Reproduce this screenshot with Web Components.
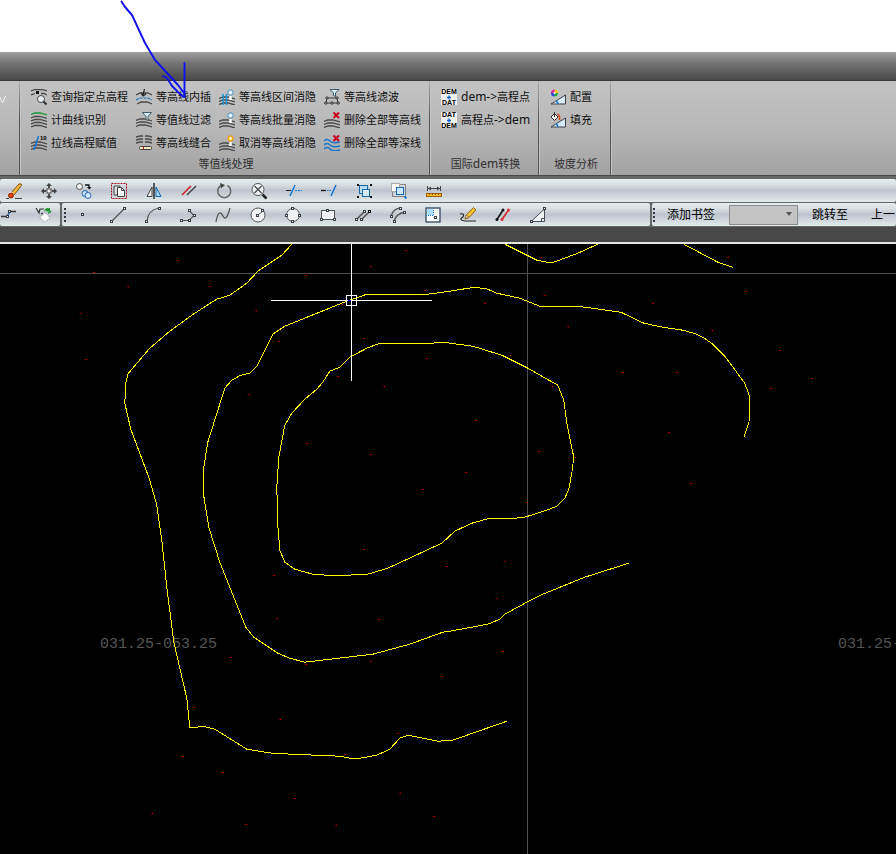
<!DOCTYPE html>
<html lang="zh-CN">
<head>
<meta charset="utf-8">
<title>等值线处理</title>
<style>
html,body{margin:0;height:100%}
body{font:11px/16px "Noto Sans","Noto Sans CJK SC",sans-serif;color:#101010;background:#fff;overflow:hidden}
</style>
</head>
<body>
<cad-window></cad-window>
<script>
const arcs = (y, n, c = '#484848') => Array.from({length: n}, (_, i) =>
  `<path d="M0 ${y + i * 3 + 1.5}L4 ${y + i * 3}H9L16 ${y + i * 3 + 2}" fill="none" stroke="${c}" stroke-width="1.3"/>`).join('');
const node = (x, y, c = '#3c4048') => `<rect x="${x - .5}" y="${y - .5}" width="2" height="2" fill="#fff" stroke="${c}"/>`;
const bulb = (c, s) => `<path d="M11.5 7v4" stroke="#fff" stroke-width="2.5"/><circle cx="11.5" cy="3.5" r="2.700" fill="${c}" stroke="${s}"/><circle cx="11.5" cy="3.5" r="1.200" fill="#fff"/>`;
const funnel = '<path d="M6.500.5h9l-3.500 4v4l-2-1v-3z" fill="#d8edf8" stroke="#405868"/>';
const cross = '<path d="M9.500.5l5.500 5.500M15 .5L9.500 6" stroke="#c8001c" stroke-width="2"/>';
const tri = '<path d="M1 15L15.500 6v9z" fill="#d8e8f4" stroke="#404048"/><path d="M6 12q2 1 2 3" fill="none" stroke="#1b78d0" stroke-width="1.500"/>';
/* lettering badge for the DEM / DAT conversion icons */
const badge = (a, b) => `<rect width="16" height="16" fill="#f0f0f0"/><text x="8" y="5" text-anchor="middle" font-family="Liberation Sans" font-weight="bold" font-size="7" fill="#000">${a}</text><path d="M8 6.500v4M6 8.500h4" stroke="#1464d0" stroke-width="1.300"/><text x="8" y="16" text-anchor="middle" font-family="Liberation Sans" font-weight="bold" font-size="7" fill="#000">${b}</text>`;

const ICONS = {
  query: '<path d="M0 2L4 .5h7L16 2M0 6l4-1.500M10 4.500h3l3 1.500" fill="none" stroke="#484848" stroke-width="1.300"/><rect x="5" y="2" width="3" height="3" fill="#111"/><circle cx="10" cy="10" r="3.500" fill="#e8f0f4" stroke="#444"/><path d="M12.500 12.500l3 3" stroke="#333" stroke-width="2"/>',
  index: arcs(1, 1, '#149632') + arcs(4.5, 4),
  assign: arcs(7, 3) + '<path d="M7.500 1L3 15" stroke="#1478d8" stroke-width="1.500"/><text x="9" y="5" font-family="Liberation Sans" font-weight="bold" font-size="6">10</text>',
  insert: '<path d="M0 6l4-2h8l4 2M1 15l4-2h6l5 2" fill="none" stroke="#484848" stroke-width="1.300"/><path d="M0 11l4-2h8l4 2" fill="none" stroke="#1474c8" stroke-width="1.200" stroke-dasharray="3 1"/><path d="M8.500 0L7 6M5 4l2 3 3-2" fill="none" stroke="#222" stroke-width="1.200"/>',
  filter: arcs(7, 3) + funnel,
  stitch: '<path d="M0 2l4-1h3M9 1h3l4 1M0 5l4-1h3M9 4h3l4 1M0 8l4-1h3M9 7h3l4 1" stroke="#484848" stroke-width="1.300" fill="none"/><rect x="3.500" y="11.500" width="12" height="3" rx="1" fill="#f0e8c0" stroke="#404040"/><path d="M7.500 11.500v3" stroke="#b82020"/>',
  hideRange: arcs(8, 3) + '<path d="M4 5v11M7.500 5v11" stroke="#1494dc" stroke-width="1.500"/>' + bulb('#c4e4f8', '#4c90bc'),
  hideBatch: arcs(8, 3) + bulb('#c4e4f8', '#4c90bc'),
  unhide: arcs(8, 3) + bulb('#ffd020', '#ec8800'),
  smooth: '<path d="M6 .5h9L11.500 4v3.500l-2-1V4z" fill="#d8edf8" stroke="#405868"/><path d="M1 14h14M3 9h10M3 9l-1 5M13 9l1 5" stroke="#3c3c3c" fill="none"/><g fill="#b8b8b8" stroke="#333"><circle cx="3" cy="9" r="1.200"/><circle cx="13" cy="9" r="1.200"/><circle cx="1.800" cy="14" r="1.200"/><circle cx="8" cy="14" r="1.200"/><circle cx="14.200" cy="14" r="1.200"/></g>',
  delHeight: arcs(8, 3) + cross,
  delDepth: '<path d="M0 6q3-3 6 0t10 1M0 10q3-3 6 0t10 1M0 14q3-3 6 0t10 1" fill="none" stroke="#1676cc" stroke-width="1.400"/>' + cross,
  demDat: badge('DEM', 'DAT'),
  datDem: badge('DAT', 'DEM'),
  config: tri + '<path d="M4.500 4V.5A3.500 3.500 0 0 1 8 4z" fill="#ffc400"/><path d="M4.500 4H8a3.500 3.500 0 0 1-3.500 3.500z" fill="#20b038"/><path d="M4.500 4v3.500A3.500 3.500 0 0 1 1 4z" fill="#2848d8"/><path d="M4.500 4H1A3.500 3.500 0 0 1 4.500.5z" fill="#e020a0"/><circle cx="4.500" cy="4" r="1" fill="#fff"/>',
  fill: tri + '<path d="M1 5l3.500-3.500L8 5 4.500 8.500z" fill="#f4f4f4" stroke="#333"/><path d="M4.500 0v5" stroke="#333"/><path d="M7.500 2q2.500 1 2 6" fill="none" stroke="#d84818" stroke-width="1.600"/>',

  erase: '<path d="M0 15.500h3M9 15.500h7" stroke="#444"/><path d="M5 10l8-9q3-1 2.500 1.500L8 12z" fill="#f8b838" stroke="#80501c"/><path d="M4 9l4 4" stroke="#fff" stroke-width="2"/><circle cx="5" cy="12.500" r="2.500" fill="#d84010" stroke="#902808"/>',
  move: '<rect x="6" y="6" width="4" height="4" fill="#fff" stroke="#444"/><path d="M8 0L5 3h2v2h2V3h2zM8 16l-3-3h2v-2h2v2h2zM0 8l3-3v2h2v2H3v2zM16 8l-3-3v2h-2v2h2v2z" fill="#454545"/>',
  copy: '<circle cx="3.500" cy="3.500" r="3" fill="#f0f0f0" stroke="#555"/><circle cx="9" cy="10.500" r="3" fill="#c4e0fa" stroke="#2468b8"/><circle cx="12" cy="12.500" r="3" fill="#d4e8fc" stroke="#2468b8"/><path d="M9 2h4v3" fill="none" stroke="#111" stroke-width="1.300"/><path d="M11 4h4.500l-2.250 2.500z" fill="#111"/>',
  clip: '<rect x=".5" y=".5" width="15" height="15" fill="none" stroke="#a00c18" stroke-dasharray="2 1"/><path d="M3 3h6v9H3z" fill="#ddd" stroke="#444"/><path d="M6.500 4.500h4l3 3v6h-7z" fill="#fff" stroke="#444"/><path d="M10.500 4.500v3h3" fill="none" stroke="#444"/>',
  mirror: '<path d="M6 4v9.500H1z" fill="#eee" stroke="#444"/><path d="M10 4v9.500h5z" fill="#a8d8f8" stroke="#1468b0"/><path d="M8 0v16" stroke="#111" stroke-width="1.300"/>',
  offset: '<path d="M1 12L10 3" stroke="#d41828" stroke-width="1.500"/><path d="M6 12L15 3" stroke="#444" stroke-width="1.500"/>',
  rotate: '<path d="M11.500 2.500A6.500 6.500 0 1 1 5 2.500" fill="none" stroke="#666" stroke-width="1.500"/><path d="M4 0l5 2-4 3.500z" fill="#444"/>',
  zoom: '<circle cx="7" cy="6.500" r="6" fill="#eef4f6" stroke="#555"/><path d="M3.500 3l7 7M10.500 3l-7 7" stroke="#444" stroke-width="1.200"/><path d="M11.500 11.500l4 4" stroke="#222" stroke-width="2.500"/>',
  trim: '<path d="M0 7.500h5" stroke="#222"/><path d="M4 13L9 2" stroke="#1478d8" stroke-width="1.500"/><path d="M9 7.500h7" stroke="#1478d8" stroke-dasharray="2 1"/>',
  extend: '<path d="M0 7.500h5" stroke="#111" stroke-width="1.300"/><path d="M6 7.500h5" stroke="#1478d8" stroke-dasharray="1.500 1"/><path d="M10 13l5-11" stroke="#1478d8" stroke-width="1.500"/>',
  group: '<rect x="3.500" y="2.500" width="8" height="8" fill="#b8def4" stroke="#1468a8"/><rect x="6.500" y="6.500" width="7" height="7" fill="#d4ecf8" stroke="#1468a8"/><path d="M1 2h2M14 2h2M1 14h2M14 14h2" stroke="#111" stroke-width="2"/>',
  select: '<path d="M1.500 1.500h13v12h-13z" fill="none" stroke="#333" stroke-dasharray="1 1"/><rect x=".5" y=".5" width="8" height="8" fill="#fff" stroke="#aaa"/><rect x="5.500" y="4.500" width="7" height="7" fill="#cce6fa" stroke="#1468c0"/><path d="M13.500 13.500l2 2" stroke="#1478e0" stroke-width="2"/>',
  measure: '<path d="M1.500 3v5M14.500 3v5M2 5.500h12" stroke="#444"/><path d="M5 3.500l-3 2 3 2zM11 3.500l3 2-3 2z" fill="#444"/><rect x=".5" y="10.500" width="15" height="3" fill="#ffc020" stroke="#a05c08"/><path d="M3.500 10v2M6.500 10v2M9.500 10v2M12.500 10v2" stroke="#885008"/>',

  jog: '<path d="M0 9.500h6.500l2-5H15" fill="none" stroke="#333" stroke-width="1.300"/><path d="M6.500 9.500l2-5" stroke="#1470d0" stroke-width="1.500"/>' + node(6, 9) + node(8, 4),
  refresh: '<path d="M0 1l3 5 1-4h4M5 7l2-1" fill="none" stroke="#333" stroke-width="1.200"/><path d="M8 4q2-4 5-2.500l1-1V4.500h-4l1-1q-1.500-.500-2.500 1z" fill="#189028"/><path d="M4 10.500l5-5 5 5-5 5z" fill="#fff" stroke="#777" stroke-dasharray="1 1"/><path d="M12 6q2 0 3-2" fill="none" stroke="#189028" stroke-width="1.500"/>',
  point: node(7, 7),
  line: '<path d="M2 14L14 2" stroke="#555" stroke-width="1.200"/>' + node(1, 14) + node(14, 1),
  arc: '<path d="M2 14Q3 3 14 1" fill="none" stroke="#555" stroke-width="1.200"/>' + node(1, 14) + node(14, 1),
  poly: '<path d="M1 13.500h8l5-5-5-5" fill="none" stroke="#555" stroke-width="1.200"/>' + node(1, 13) + node(9, 13) + node(14, 8) + node(9, 3),
  spline: '<path d="M1 15C3 3 6 5 8 9S12 12 15 1" fill="none" stroke="#555" stroke-width="1.300"/>',
  circle: '<circle cx="8" cy="8" r="7" fill="#f0f2f4" stroke="#555"/><path d="M8 8l5-4" stroke="#555"/>' + node(7, 8) + node(12, 3),
  circle4: '<circle cx="8" cy="8" r="6.500" fill="#f0f2f4" stroke="#555"/>' + node(7, 1) + node(1, 8) + node(14, 8) + node(7, 14),
  rect: '<rect x="1.500" y="3.500" width="13" height="9" fill="#f0f2f4" stroke="#555"/>' + node(1, 12) + node(14, 12) + node(7, 3),
  dline: '<path d="M1 13L9 5M6 13L14 5" stroke="#555" stroke-width="1.600"/>' + node(1, 12) + node(6, 12) + node(9, 4) + node(14, 4, '#111'),
  darc: '<path d="M1 9Q3 2 10 1M4 14Q6 7 15 5" fill="none" stroke="#555" stroke-width="1.300"/>' + node(1, 9) + node(10, 1) + node(4, 14) + node(14, 5),
  view: '<rect x="1" y="1" width="14" height="14" fill="#f8fafc" stroke="#344860" stroke-width="1.300"/><rect x="2" y="2" width="6" height="6" fill="#a8dcfa"/><path d="M8.500 1v7.500H1" fill="none" stroke="#1478d0" stroke-dasharray="1 1"/>' + node(10, 10),
  pencil: '<path d="M0 7q5-1 3 3-5 3 2 4h11" fill="none" stroke="#222" stroke-width="1.100"/><path d="M5 12l1-3.500 7.500-8 2.500 2.500-7.500 8z" fill="#f8c430" stroke="#946010"/><path d="M5 12l1-4 3 2z" fill="#e8c8a0" stroke="#806040" stroke-width=".600"/>',
  pair: '<path d="M2 12.500L8 3" stroke="#111" stroke-width="1.500"/><path d="M7 12.500L13.500 3" stroke="#d82028" stroke-width="1.500"/><g fill="#111"><circle cx="2" cy="12.500" r="1.500"/><circle cx="8" cy="3" r="1.500"/></g><g fill="#e03038"><circle cx="7" cy="12.500" r="1.500"/><circle cx="13.500" cy="3" r="1.500"/></g>',
  triangle: '<path d="M1 14.500L14.500 2v12.500z" fill="#f0f2f4" stroke="#444c58"/><path d="M11.500 14v-2.500h3" fill="none" stroke="#444c58"/>' + node(1, 14) + node(14, 1),
};

const define = (name, html) => {
  const t = document.createElement('template');
  t.innerHTML = html;
  customElements.define(name, class extends HTMLElement {
    constructor() {
      super();
      this.attachShadow({mode: 'open'}).append(t.content.cloneNode(true));
    }
    connectedCallback() {
      const svg = this.shadowRoot.querySelector('svg.icon');
      if (svg) svg.innerHTML = ICONS[this.getAttribute('icon')] || '';
      const b = this.shadowRoot.querySelector('button');
      if (b && this.hasAttribute('label')) b.setAttribute('aria-label', this.getAttribute('label'));
    }
  });
};

define('ribbon-button', `<style>
:host{display:block}
button{display:flex;align-items:center;gap:4px;height:23px;padding:0;border:0;background:none;font:inherit;color:inherit;white-space:nowrap}
svg{width:16px;height:16px;flex:none;display:block}
</style><button type="button"><svg class="icon" viewBox="0 0 16 16" aria-hidden="true"></svg><span><slot></slot></span></button>`);

define('ribbon-panel', `<style>
:host{display:flex;flex-direction:column;padding-top:4px;
border-right:1px solid;border-image:linear-gradient(#b0b0b0,#555 40%) 1;box-shadow:1px 0 #c4c4c4}
.grid{display:grid;grid-auto-flow:column;grid-template-rows:repeat(3,23px);column-gap:8px;justify-content:start;padding:0 8px 0 11px}
.name{height:20px;line-height:20px;padding-left:3px;text-align:center;color:#303030;white-space:nowrap}
</style><div class="grid"><slot></slot></div><div class="name"><slot name="name"></slot></div>`);

define('tool-button', `<style>
:host{display:block;flex:none}
button{display:block;padding:0;border:0;background:none}
svg{width:16px;height:16px;display:block;overflow:visible}
</style><button type="button"><svg class="icon" viewBox="0 0 16 16" aria-hidden="true"></svg></button>`);

define('tool-strip', `<style>
:host{display:flex;align-items:center;gap:19px;box-sizing:border-box;height:23px;border-radius:2px;
background:linear-gradient(#e6eeee,#d8dfe2 25%,#bfc4ce 50%,#cdd4da 70%,#e2eceb)}
</style><slot></slot>`);

define('strip-grip', `<style>
:host{display:block;flex:none;width:2px;height:14px;background:repeating-linear-gradient(#303844 0 2px,transparent 2px 4px)}
</style>`);

define('bookmark-bar', `<style>
:host{display:flex;align-items:center;gap:14px;font-size:12px;white-space:nowrap}
button{border:0;padding:0;background:none;font:inherit;color:#000}
.box{position:relative;width:69px;height:20px}
select{display:block;box-sizing:border-box;appearance:none;width:100%;height:100%;border:1px solid #8c8c8c;border-radius:0;background:#c4c4c4;padding:0}
svg{position:absolute;right:6px;top:7px;width:6px;height:4px}
.next{margin-left:9px}
</style><button type="button">添加书签</button>
<span class="box"><select aria-label="书签"><option></option></select><svg viewBox="0 0 6 4" aria-hidden="true"><path d="M0 0h6L3 4z" fill="#555"/></svg></span>
<button type="button">跳转至</button><button type="button" class="next">上一</button>`);

const contours = [
  '292,244 282,255 258,271 247,283 230,295 217,299 212,302 192,315 170,331 150,348 132,369 128,374 126,383 125,403 131,429 149,477 157,505 162,540 167,587 174,642 177,655 187,698 190,727 197,727 203,726 215,729 247,749 272,753 292,754 340,756 350,758 360,758 377,755 390,749 400,738 408,735 438,741 453,740 507,721',
  '744,437 749,423 750,415 750,397 745,383 725,356 713,344 706,339 697,334 683,330 663,327 644,323 621,312 593,308 577,306 540,306 520,298 497,293 488,289 475,287 450,291 428,294 367,294 347,301 285,326 273,334 257,366 250,373 241,375 232,380 225,388 208,442 204,467 204,496 209,527 213,540 220,562 246,627 254,637 278,653 290,658 305,662 373,654 410,644 443,632 450,631 488,624 500,619 505,614 527,602 543,594 585,577 629,563',
  '330,371 340,367 350,357 367,348 380,343 432,343 443,342 473,346 502,355 528,368 558,385 564,400 567,423 571,443 574,457 572,473 569,489 565,498 557,506 547,510 525,517 515,518 490,518 472,523 455,531 442,543 388,568 368,574 347,575 327,575 313,574 295,569 285,562 280,550 278,525 277,487 279,457 285,425 292,413 305,399 317,389 323,382 330,371',
  '505,244 537,260 547,262 554,262 578,253 598,244',
  '684,244 718,262 733,267'
];
const dots = '178,260 94,272 128,286 210,286 81,313 86,359 256,310 306,275 371,266 406,250 425,290 342,304 279,341 364,338 427,358 338,376 384,386 249,394 307,443 371,454 423,489 485,303 545,295 541,257 568,326 653,303 728,257 746,291 712,330 780,350 623,372 677,372 812,378 771,388 510,355 552,386 476,420 669,432 539,451 466,472 575,457 691,483 527,502 364,549 274,575 447,566 277,618 379,619 231,657 306,664 371,661 442,676 194,707 280,719 398,733 183,756 345,754 223,772 295,798 152,813 246,824 336,825 400,793 434,816 505,561 497,598 503,651'
  .split(' ').map(p => p.split(',').map(Number));

define('cad-canvas', `<style>
:host{display:block;overflow:hidden;background:#000}
svg{display:block;width:100%;height:100%}
text{font:15px "Liberation Mono",monospace;fill:#555}
</style><svg><g transform="translate(0 -244)" shape-rendering="crispEdges">
<path d="M0 273.500H4000M527.500 244V4000" stroke="#505050"/>
<text x="100" y="648">031.25-053.25</text><text x="838" y="648">031.25-053.25</text>
<path d="${dots.map(([x, y]) => `M${x - 2} ${y}h2v1h-2z`).join('')}" fill="#4a0000"/>
<path d="${dots.map(([x, y]) => `M${x} ${y}h1v1h-1z`).join('')}" fill="#f00"/>
<g transform="translate(-.200 .200)" fill="none" stroke="#ff0">${contours.map(p => `<polyline points="${p}"/>`).join('')}</g>
<path d="M271 300.500H432M351.500 244V381M346.500 295.500h10v10h-10z" fill="none" stroke="#fff"/>
<path d="M348 300.500h3" stroke="#00f"/>
</g></svg>`);

define('pen-arrow', `<style>
:host{position:absolute;left:115px;top:0;width:75px;height:102px;pointer-events:none}
svg{display:block;width:100%;height:100%}
</style><svg viewBox="115 0 75 102" aria-hidden="true"><path d="M121.500 1.500L125 7L132 15L138 28L145 43L155 60L168 74L178 85L184 93M163 76L167 78L172 86L181 95L184 97M184.500 63V97" fill="none" stroke="#1010f0" stroke-width="1.900" stroke-linecap="round" stroke-linejoin="round"/></svg>`);

const rb = (icon, text) => `<ribbon-button icon="${icon}">${text}</ribbon-button>`;
const tb = list => list.split(' ').map(i => `<tool-button icon="${i}" label="${i}"></tool-button>`).join('');

define('cad-window', `<style>
:host{display:flex;flex-direction:column;height:100vh;position:relative;overflow:hidden}
.blank{height:52px;flex:none}
.title{height:28px;flex:none;background:linear-gradient(#a0a0a0,#747474 40%,#484848);border-bottom:1px solid #3a3638}
.ribbon{display:flex;flex:none;height:94px;background:linear-gradient(#c3c3c3,#b8b8b8 50%,#a2a2a2);border-bottom:1px solid #484848}
.edge{width:19px;flex:none;border-right:1px solid;border-image:linear-gradient(#b0b0b0,#555 40%) 1;box-shadow:1px 0 #c4c4c4}
.edge button{display:block;margin:13px 0 0;padding:0;border:0;background:none}
.edge svg{display:block;width:6px;height:10px}
.latin{font-size:12px}
.slope{min-width:71px}
.bars{flex:none;background:#666;padding-top:3px;display:grid;row-gap:1px}
.row{display:flex;gap:2px}
.first{padding-left:6px}
.tail{padding:0 8px 0 1px}
.draw{flex:none;padding:0 104px 0 2px;gap:9px}
.draw div{display:flex;gap:19px}
.marks{flex:1;min-width:0;padding-left:1px;gap:12px}
.gap{height:18px;flex:none;box-sizing:border-box;background:#484848;border-top:1px solid #666;border-bottom:2px solid #e4e4e0}
cad-canvas{flex:1;min-height:0}
</style>
<div class="blank"></div>
<div class="title"></div>
<div class="ribbon">
<div class="edge"><button type="button" aria-label="展开"><svg viewBox="0 0 6 10"><path d="M0 3l2.500 6L5.500 2" fill="none" stroke="#eee"/></svg></button></div>
<ribbon-panel>
${rb('query', '查询指定点高程')}${rb('index', '计曲线识别')}${rb('assign', '拉线高程赋值')}
${rb('insert', '等高线内插')}${rb('filter', '等值线过滤')}${rb('stitch', '等高线缝合')}
${rb('hideRange', '等高线区间消隐')}${rb('hideBatch', '等高线批量消隐')}${rb('unhide', '取消等高线消隐')}
${rb('smooth', '等高线滤波')}${rb('delHeight', '删除全部等高线')}${rb('delDepth', '删除全部等深线')}
<span slot="name">等值线处理</span></ribbon-panel>
<ribbon-panel>
${rb('demDat', '<span class="latin">dem-&gt;</span>高程点')}${rb('datDem', '高程点<span class="latin">-&gt;dem</span>')}
<span slot="name">国际<span class="latin">dem</span>转换</span></ribbon-panel>
<ribbon-panel class="slope">
${rb('config', '配置')}${rb('fill', '填充')}
<span slot="name">坡度分析</span></ribbon-panel>
</div>
<div class="bars">
<tool-strip class="first">${tb('erase move copy clip mirror offset rotate zoom trim extend group select measure')}</tool-strip>
<div class="row">
<tool-strip class="tail">${tb('jog refresh')}</tool-strip>
<tool-strip class="draw"><strip-grip></strip-grip><div>${tb('point line arc poly spline circle circle4 rect dline darc view pencil pair triangle')}</div></tool-strip>
<tool-strip class="marks"><strip-grip></strip-grip><bookmark-bar></bookmark-bar></tool-strip>
</div>
</div>
<div class="gap"></div>
<cad-canvas></cad-canvas>
<pen-arrow></pen-arrow>`);
</script>
</body>
</html>
